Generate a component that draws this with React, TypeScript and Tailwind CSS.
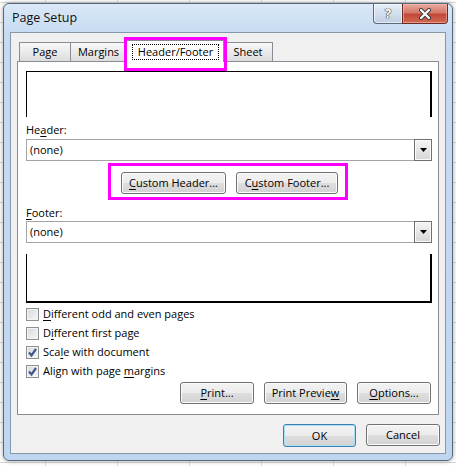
import React from "react";

function U({ children }: { children: React.ReactNode }) {
  return <span className="underline decoration-1 underline-offset-[2px]">{children}</span>;
}

function Btn({ w, children, def }: { w: string; children: React.ReactNode; def?: boolean }) {
  return (
    <div
      className={`${w} flex items-center justify-center rounded-[3px] border bg-[linear-gradient(to_bottom,#f3f3f3_0%,#ececec_50%,#dedede_50%,#d2d2d2_100%)] text-[11px] text-black leading-none ${
        def ? "h-[23px] border-[#3c7fb1] shadow-[inset_0_0_0_1px_#a8e1f7]" : "h-[22px] border-[#707070] shadow-[inset_0_0_0_1px_#fcfcfc]"
      }`}
    >
      <span className="-mt-[1px]">{children}</span>
    </div>
  );
}

function Select() {
  return (
    <div className="h-[22px] flex">
      <div className="flex-1 border border-r-0 border-[#a5a5a5] bg-white flex items-center pl-[3px] text-[11px] text-black">
        (none)
      </div>
      <div className="w-[18px] border border-[#707070] bg-[linear-gradient(to_bottom,#f4f4f4,#e6e6e6_50%,#d6d6d6)] shadow-[inset_0_0_0_1px_#fafafa] flex items-center justify-center">
        <svg width="7" height="4" viewBox="0 0 7 4">
          <path d="M0 0H7L3.5 4Z" fill="#000" />
        </svg>
      </div>
    </div>
  );
}

function Check({ checked, children }: { checked?: boolean; children: React.ReactNode }) {
  return (
    <div className="h-[19px] flex items-center">
      <div className="w-[13px] h-[13px] border border-[#8e8f8f] bg-[linear-gradient(135deg,#d6d8dc,#f7f7f7)] shadow-[inset_0_0_0_1px_#f4f4f4] flex items-center justify-center">
        {checked && (
          <svg width="11" height="11" viewBox="0 0 11 11">
            <path d="M2 5.5L4.5 8.5L9 2" fill="none" stroke="#42588a" strokeWidth="2.2" />
          </svg>
        )}
      </div>
      <span className="ml-[4px] text-[11px] text-black">{children}</span>
    </div>
  );
}

function Tab({ w, children }: { w: string; children: React.ReactNode }) {
  return (
    <div
      className={`${w} h-[19px] border border-b-0 border-[#898c95] bg-[linear-gradient(to_bottom,#f7f7f7,#ebebeb_50%,#dcdcdc)] flex items-center justify-center text-[11px] text-black -ml-[1px] first:ml-0`}
    >
      {children}
    </div>
  );
}

export default function App() {
  return (
    <div className="w-[456px] h-[466px] overflow-hidden pt-[3px] pl-[3px] bg-white bg-[linear-gradient(to_right,#d8d8d8_1px,transparent_1px),linear-gradient(to_bottom,#d8d8d8_1px,transparent_1px)] bg-[size:72px_20px] bg-[position:45px_2px] font-['Open_Sans',sans-serif]">
      <div className="w-[450px] h-[458px] rounded-[6px] border border-[#56677c] bg-[linear-gradient(to_bottom,#dbe8f7,#c6dbf2_30px,#bfd6f0)] shadow-[0_0_5px_rgba(0,0,0,0.35)] flex flex-col">
        {/* title bar */}
        <div className="h-[28px] flex justify-between items-start">
          <div className="pl-[8px] pt-[5px] text-[12.5px] text-[#111]">Page Setup</div>
          <div className="flex mr-[4px]">
            <div className="w-[29px] h-[20px] border border-t-0 border-r-0 border-[#5a6b80] rounded-bl-[4px] bg-[linear-gradient(to_bottom,#e6eef7,#d2dfee_50%,#bfcfe2)] shadow-[inset_0_0_0_1px_rgba(255,255,255,0.6)] flex items-center justify-center">
              <span className="text-[13px] font-bold text-white leading-none [text-shadow:0_0_1px_#333,0_0_1px_#333,0_0_1px_#333]">?</span>
            </div>
            <div className="w-[46px] h-[20px] border border-t-0 border-[#6a2a22] rounded-br-[4px] bg-[linear-gradient(to_bottom,#e9a99c,#d47a6b_45%,#c4473a_55%,#d06a50)] shadow-[inset_0_0_0_1px_rgba(255,200,190,0.5)] flex items-center justify-center">
              <svg width="14" height="12" viewBox="0 0 14 12">
                <path d="M3 2L11 10M11 2L3 10" stroke="#3b3b3b" strokeWidth="4" strokeLinecap="round" />
                <path d="M3 2L11 10M11 2L3 10" stroke="#fff" strokeWidth="2.2" strokeLinecap="round" />
              </svg>
            </div>
          </div>
        </div>

        {/* client area */}
        <div className="mx-[6px] h-[422px] border border-[#8796a8] bg-[#f0f0f0] pt-[7px] pb-[6px] flex flex-col">
          {/* tabs */}
          <div className="h-[21px] flex items-end pl-[8px] relative z-10">
            <Tab w="w-[52px]">Page</Tab>
            <Tab w="w-[57px]">Margins</Tab>
            <div className="relative w-[98px] h-[22px] -mb-[1px] -ml-[1px] border border-b-0 border-[#898c95] bg-white flex">
              <div className="mt-[3px] ml-[5px] mr-[4px] mb-[2px] flex-1 border border-dotted border-black flex items-center justify-center text-[11px] text-black">
                Header/Footer
              </div>
              <div className="absolute -left-[3px] -right-[4px] -top-[4px] -bottom-[9px] border-[3px] border-[#f0f] pointer-events-none" />
            </div>
            <Tab w="w-[50px]">Sheet</Tab>
          </div>

          {/* panel */}
          <div className="mx-[6px] h-[354px] border border-[#898c95] bg-white pl-[8px] pr-[6px] pt-[9px] flex flex-col">
            <div className="h-[46px] border-t border-l border-r-2 border-black" />
            <div className="mt-[5px] h-[16px] flex items-center text-[11px] text-black">
              He<U>a</U>der:
            </div>
            <div className="mt-[1px]">
              <Select />
            </div>
            <div className="mt-[11px] flex justify-center">
              <div className="relative flex gap-[10px] ml-[1px]">
                <Btn w="w-[105px]">
                  <U>C</U>ustom Header...
                </Btn>
                <Btn w="w-[102px]">
                  C<U>u</U>stom Footer...
                </Btn>
                <div className="absolute -left-[13px] -right-[10px] -top-[9px] -bottom-[6px] border-[3px] border-[#f0f] pointer-events-none" />
              </div>
            </div>
            <div className="mt-[11px] h-[16px] flex items-center text-[11px] text-black">
              <U>F</U>ooter:
            </div>
            <div>
              <Select />
            </div>
            <div className="mt-[11px] h-[49px] border-l border-b-2 border-r-2 border-black" />
            <div className="mt-[2px] flex flex-col">
              <Check>
                <U>D</U>ifferent odd and even pages
              </Check>
              <Check>
                D<U>i</U>fferent first page
              </Check>
              <Check checked>
                Sca<U>l</U>e with document
              </Check>
              <Check checked>
                Align with page <U>m</U>argins
              </Check>
            </div>
            <div className="mt-[1px] flex justify-end gap-[10px] mr-[1px]">
              <Btn w="w-[74px]">
                <U>P</U>rint...
              </Btn>
              <Btn w="w-[83px]">
                Print Previe<U>w</U>
              </Btn>
              <Btn w="w-[74px]">
                <U>O</U>ptions...
              </Btn>
            </div>
          </div>

          {/* bottom buttons */}
          <div className="mt-[9px] flex justify-end items-start gap-[10px] pr-[5px]">
            <Btn w="w-[73px]" def>
              OK
            </Btn>
            <Btn w="w-[74px]">Cancel</Btn>
          </div>
        </div>
      </div>
    </div>
  );
}
